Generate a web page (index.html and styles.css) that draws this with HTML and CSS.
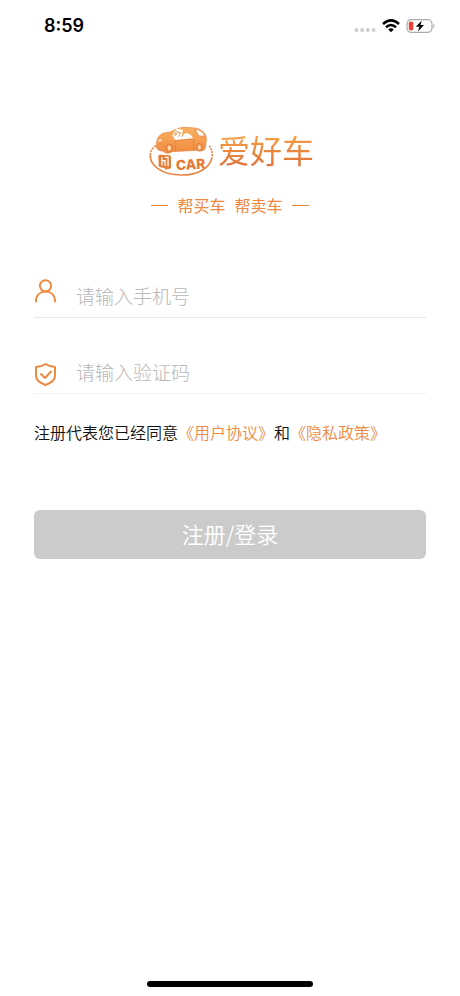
FILE: index.html
```html
<!DOCTYPE html>
<html lang="zh-CN">
<head>
<meta charset="utf-8">
<meta name="viewport" content="width=device-width, initial-scale=1">
<title>爱好车</title>
<link rel="stylesheet" href="styles.css">
</head>
<body>
<header class="status">
  <time class="clock">8:59</time>
  <div class="indicators">
    <svg width="22" height="6" viewBox="0 0 22 6" fill="#cdcdcd" aria-hidden="true"><circle cx="2.5" cy="3" r="2"/><circle cx="8.2" cy="3" r="2"/><circle cx="13.9" cy="3" r="2"/><circle cx="19.6" cy="3" r="2"/></svg>
    <svg width="18" height="14" viewBox="0 0 18 14" fill="none" stroke="#000" stroke-width="2.5" aria-hidden="true"><path d="M1 5Q9-2.2 17 5"/><path d="M4 8.2Q9 3.8 14 8.2"/><path d="M6.3 10.4Q9 8.2 11.7 10.4L9 13.2Z" fill="#000" stroke="none"/></svg>
    <svg width="30" height="14" viewBox="0 0 30 14" aria-hidden="true"><rect x="1" y=".7" width="25" height="12.6" rx="4" fill="#fff" stroke="#aaa" stroke-width="1.2"/><path d="M27.5 4.8q2 2.2 0 4.4Z" fill="#999"/><rect x="2.8" y="2.5" width="4.5" height="9" rx="1.8" fill="#ee4238"/><path d="M15.8 1.5 9.8 7.8h3.5L12 12.5l6-6.4h-3.5Z" fill="#000"/></svg>
  </div>
</header>
<main class="page">
  <section class="brand">
    <h1 class="logo">
      <svg width="64" height="52" viewBox="25 30 192 156" aria-hidden="true">
        <defs><linearGradient id="paint" x1="0" y1="0" x2="0" y2="1"><stop offset="0" stop-color="#f9b262"/><stop offset="1" stop-color="#f08a3e"/></linearGradient></defs>
        <path d="M29 118C26 150 62 180 122 180c50 0 86-21 92-53" fill="none" stroke="#e98443" stroke-width="5"/>
        <path d="M45 92C35 99 30 107 29 118M206 92c7 10 10 23 8 35" fill="none" stroke="#e98443" stroke-width="5" stroke-dasharray="6 3"/>
        <path d="M48 99c-3-16 1-35 18-44 12-3 20-2 28-6 14-11 34-14 53-11 19 0 34 4 43 15 7 8 9 17 6 30-1 8-1 15-5 21-5 5-15 5-22 2l-75 4c-12 8-22 4-28-2-8 0-14-2-18-9Z" fill="url(#paint)" stroke="#e58543" stroke-width="2"/>
        <path d="M98 71 114 52l12 2-5 15 12-14c14 0 21 6 24 15l-50 5Z" fill="#fff"/>
        <path d="M163 43c13 1 24 8 30 20-10 1-16 1-21-4Z" fill="#fff" stroke="#df7836" stroke-width="2"/>
        <path d="m107 40 21 6-14 24-20-6Z" fill="#fff"/>
        <path d="m108 47-7 13 4 1 7-10 8 3-7 11" fill="none" stroke="#ee9246" stroke-width="3"/>
        <path d="M105 77v31M105 77l53-4v34" fill="none" stroke="#df7b3a" stroke-width="2"/>
        <path d="M52 76q8-6 14-1-4 6-14 4Z" fill="#fff" opacity=".7"/>
        <ellipse cx="86" cy="99" rx="9" ry="12" fill="#f5a85f" stroke="#dd7839" stroke-width="3"/><ellipse cx="86" cy="99" rx="4" ry="7" fill="#fde0bd"/>
        <ellipse cx="176" cy="97" rx="8" ry="11" fill="#f5a85f" stroke="#dd7839" stroke-width="3"/><ellipse cx="176" cy="97" rx="4" ry="6" fill="#fde0bd"/>
        <path d="M57 119q-4 0-4 5l1 27q0 5 5 6l12 2 5 6 4-4 5 1q6 0 6-5v-31q0-5-5-5Z" fill="#e77c36"/>
        <path d="M64 127v24M64 137h9v15M72 127h10v27" fill="none" stroke="#fff" stroke-width="4"/>
        <text class="badge-text" x="107" y="166" transform="rotate(-4 107 166)">CAR</text>
      </svg>
      <span class="wordmark">爱好车</span>
    </h1>
    <p class="tagline"><span>帮买车</span><span>帮卖车</span></p>
  </section>
  <form class="login">
    <div class="field">
      <label for="phone" aria-label="手机号"><svg width="22" height="24" viewBox="0 0 22 24"><circle cx="11.5" cy="6.8" r="5.6"/><path d="M2 22.5c0-6.5 4-9.9 9.5-9.9s9.5 3.4 9.5 9.9"/></svg></label>
      <input id="phone" type="tel" placeholder="请输入手机号">
    </div>
    <div class="field field-code">
      <label for="code" aria-label="验证码"><svg width="22" height="24" viewBox="0 0 22 24"><path d="M11.5 2C8.5 4 5.5 5 2 5v9c0 4.5 4 7 9.5 9 5.5-2 9.500-4.500 9.500-9V5C17.5 5 14.5 4 11.5 2Z"/><path d="m7 12 4 4 6-6.5"/></svg></label>
      <input id="code" type="text" inputmode="numeric" placeholder="请输入验证码">
    </div>
    <p class="terms">注册代表您已经同意<a href="#agreement">《用户协议》</a>和<a href="#privacy">《隐私政策》</a></p>
    <button class="submit" type="submit">注册/登录</button>
  </form>
</main>
<footer class="home"><div class="home-bar"></div></footer>
</body>
</html>
```
FILE: styles.css
```css
* { box-sizing: border-box; }

body {
  margin: 0;
  min-height: 100vh;
  display: flex;
  flex-direction: column;
  background: #fff;
  color: #111;
  font-family: "Noto Sans CJK SC", sans-serif;
}

.status {
  display: flex;
  align-items: center;
  justify-content: space-between;
  height: 52px;
  padding: 0 24px 0 44px;
}

.clock {
  font: 600 18px/24px Inter, sans-serif;
  color: #000;
}

.indicators {
  display: flex;
  align-items: center;
  gap: 6px;
}

.indicators svg:first-child { margin-top: 8px; }

.page {
  flex: 1;
  padding: 0 34px;
}

.brand {
  display: flex;
  flex-direction: column;
  align-items: center;
  padding-top: 73px;
}

.logo {
  display: flex;
  align-items: center;
  gap: 5px;
  margin: 0;
  padding-left: 3px;
}

.badge-text {
  font: 800 41px Inter, sans-serif;
  fill: #e67831;
}

.wordmark {
  font-size: 32px;
  font-weight: 400;
  line-height: 48px;
  padding-bottom: 4px;
  color: transparent;
  background: linear-gradient(#f5a044 20%, #df7139 80%);
  background-clip: text;
}

.tagline {
  display: flex;
  align-items: center;
  gap: 9px;
  margin: 16px 0 0;
  font-size: 16px;
  line-height: 24px;
  color: #ee8740;
}

.tagline::before,
.tagline::after {
  content: "";
  width: 17px;
  height: 1px;
  background: #ee8740;
}

.login { padding-top: 48px; }

.field {
  display: flex;
  align-items: center;
  gap: 20px;
  height: 53px;
  margin-bottom: 23px;
  border-bottom: 1px solid #e8e8e8;
}

.field label {
  display: flex;
}

.field svg {
  fill: none;
  stroke: #ed8b42;
  stroke-width: 2;
  stroke-linecap: round;
  stroke-linejoin: round;
}

.field-code { border-color: #f0f0f0; }

.field-code label {
  align-self: flex-end;
  padding-bottom: 7px;
}

.field input {
  flex: 1;
  min-width: 0;
  height: 44px;
  padding: 8px 0 0;
  border: 0;
  outline: 0;
  background: none;
  color: #111;
  font: 300 19px/28px "Noto Sans CJK SC", sans-serif;
}

.field input::placeholder { color: #b8b8b8; }

.terms {
  margin: 0;
  font-size: 16px;
  font-weight: 350;
  line-height: 30px;
  white-space: nowrap;
}

.terms a {
  color: #ed8b42;
  text-decoration: none;
}

.submit {
  display: block;
  width: 100%;
  height: 49px;
  margin-top: 63px;
  padding: 0 0 3px;
  border: 0;
  border-radius: 6px;
  background: #cbcbcb;
  color: #fff;
  font: 350 22px/32px "Noto Sans CJK SC", sans-serif;
}

.home {
  display: flex;
  justify-content: center;
  padding: 8px 0 9px;
}

.home-bar {
  width: 36%;
  height: 6px;
  border-radius: 3px;
  background: #000;
}
```
